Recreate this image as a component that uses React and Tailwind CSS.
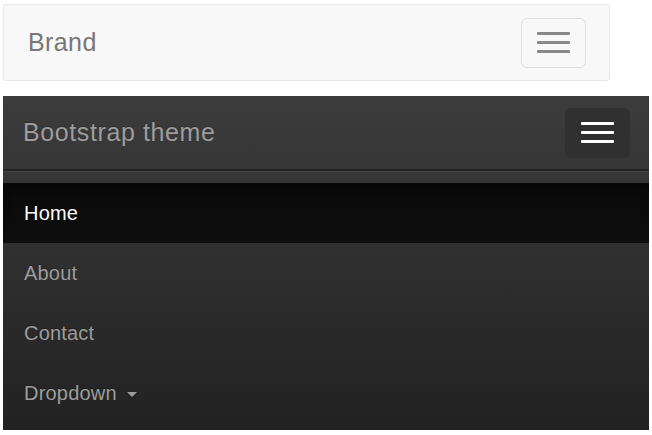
import React from 'react';

const font = { fontFamily: '"Liberation Sans", Arial, sans-serif' };

const Bars = ({ color }) => (
  <div className="flex flex-col gap-[6px]">
    <span className={`block h-[3px] w-[33px] rounded-[1px] ${color}`} />
    <span className={`block h-[3px] w-[33px] rounded-[1px] ${color}`} />
    <span className={`block h-[3px] w-[33px] rounded-[1px] ${color}`} />
  </div>
);

const NavItem = ({ label, active, caret }) => (
  <a
    href="#"
    className={`flex h-[60px] items-center px-[21px] text-[20px] tracking-[0.2px] ${
      active
        ? 'bg-linear-to-b from-[#080808] to-[#0f0f0f] text-white shadow-[inset_0_3px_9px_rgba(0,0,0,0.25)]'
        : 'text-[#9d9d9d]'
    }`}
    style={{ textShadow: '0 -1px 0 rgba(0,0,0,0.25)' }}
  >
    {label}
    {caret && (
      <span className="ml-[10px] mt-[2px] inline-block h-0 w-0 border-x-[5px] border-t-[5px] border-x-transparent border-t-[#9d9d9d]" />
    )}
  </a>
);

export default function App() {
  return (
    <div className="min-h-[435px] bg-white" style={font}>
      {/* Default navbar */}
      <nav className="ml-[3px] mt-[4px] flex h-[77px] w-[607px] items-center justify-between rounded-[3px] border border-[#e7e7e7] bg-[#f8f8f8] pl-[24px] pr-[23px]">
        <span className="text-[25px] tracking-[0.4px] text-[#777]">Brand</span>
        <button className="flex h-[50px] w-[65px] items-center justify-center rounded-[6px] border border-[#dddddd]">
          <Bars color="bg-[#888]" />
        </button>
      </nav>

      {/* Inverse navbar */}
      <nav className="ml-[3px] mt-[15px] h-[334px] w-[646px] bg-linear-to-b from-[#3c3c3c] to-[#222]">
        <div className="flex h-[73px] items-center justify-between pl-[20px] pr-[19px]">
          <span
            className="text-[25px] tracking-[0.6px] text-[#9d9d9d]"
            style={{ textShadow: '0 -1px 0 rgba(0,0,0,0.25)' }}
          >
            Bootstrap theme
          </span>
          <button className="flex h-[50px] w-[65px] items-center justify-center rounded-[6px] bg-[#303030]">
            <Bars color="bg-white" />
          </button>
        </div>
        <div className="border-t-2 border-[#222] pt-[12px] shadow-[inset_0_1px_0_rgba(255,255,255,0.08)]">
          <NavItem label="Home" active />
          <NavItem label="About" />
          <NavItem label="Contact" />
          <NavItem label="Dropdown" caret />
        </div>
      </nav>
    </div>
  );
}
